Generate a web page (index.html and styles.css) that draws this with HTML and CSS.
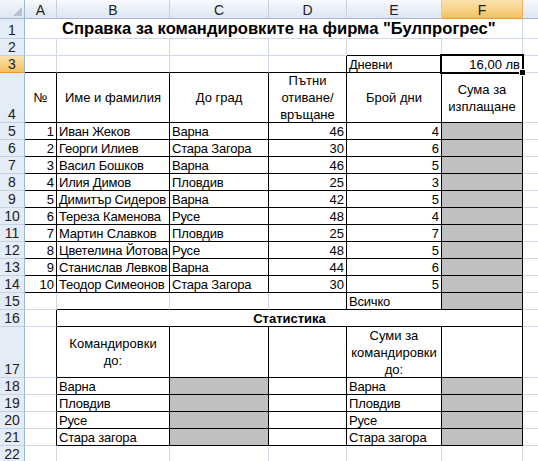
FILE: index.html
```html
<!DOCTYPE html>
<html>
<head>
<meta charset="utf-8">
<link rel="stylesheet" href="styles.css">
</head>
<body>
<div class="sheet">
  <div class="corner"><svg class="tri" width="10" height="10" viewBox="0 0 10 10"><polygon points="10,1 10,10 1,10" fill="#b6c4d6"/></svg></div>
  <div class="ch">A</div><div class="ch">B</div><div class="ch">C</div><div class="ch">D</div><div class="ch">E</div><div class="ch sel">F</div><div class="ch last"></div>

  <div class="rh">1</div><div class="c title">Справка за командировките на фирма "Булпрогрес"</div><div class="c last"></div>

  <div class="rh">2</div><div class="c"></div><div class="c"></div><div class="c"></div><div class="c"></div><div class="c b"></div><div class="c b"></div><div class="c last"></div>

  <div class="rh sel">3</div><div class="c b"></div><div class="c b"></div><div class="c b"></div><div class="c b r"></div><div class="c b r">Дневни</div><div class="c b r tr active">16,00 лв<span class="handle"></span></div><div class="c last"></div>

  <div class="rh">4</div>
  <div class="c b r tc vc"><span>№</span></div>
  <div class="c b r tc vc"><span>Име и фамилия</span></div>
  <div class="c b r tc vc"><span>До град</span></div>
  <div class="c b r tc vc"><span>Пътни<br>отиване/<br>връщане</span></div>
  <div class="c b r tc vc"><span>Брой дни</span></div>
  <div class="c b r tc vc"><span>Сума за<br>изплащане</span></div>
  <div class="c last"></div>

  <div class="rh">5</div><div class="c b r tr">1</div><div class="c b r">Иван Жеков</div><div class="c b r">Варна</div><div class="c b r tr">46</div><div class="c b r tr">4</div><div class="c b r g"></div><div class="c last"></div>
  <div class="rh">6</div><div class="c b r tr">2</div><div class="c b r">Георги Илиев</div><div class="c b r">Стара Загора</div><div class="c b r tr">30</div><div class="c b r tr">6</div><div class="c b r g"></div><div class="c last"></div>
  <div class="rh">7</div><div class="c b r tr">3</div><div class="c b r">Васил Бошков</div><div class="c b r">Варна</div><div class="c b r tr">46</div><div class="c b r tr">5</div><div class="c b r g"></div><div class="c last"></div>
  <div class="rh">8</div><div class="c b r tr">4</div><div class="c b r">Илия Димов</div><div class="c b r">Пловдив</div><div class="c b r tr">25</div><div class="c b r tr">3</div><div class="c b r g"></div><div class="c last"></div>
  <div class="rh">9</div><div class="c b r tr">5</div><div class="c b r">Димитър Сидеров</div><div class="c b r">Варна</div><div class="c b r tr">42</div><div class="c b r tr">5</div><div class="c b r g"></div><div class="c last"></div>
  <div class="rh">10</div><div class="c b r tr">6</div><div class="c b r">Тереза Каменова</div><div class="c b r">Русе</div><div class="c b r tr">48</div><div class="c b r tr">4</div><div class="c b r g"></div><div class="c last"></div>
  <div class="rh">11</div><div class="c b r tr">7</div><div class="c b r">Мартин Славков</div><div class="c b r">Пловдив</div><div class="c b r tr">25</div><div class="c b r tr">7</div><div class="c b r g"></div><div class="c last"></div>
  <div class="rh">12</div><div class="c b r tr">8</div><div class="c b r">Цветелина Йотова</div><div class="c b r">Русе</div><div class="c b r tr">48</div><div class="c b r tr">5</div><div class="c b r g"></div><div class="c last"></div>
  <div class="rh">13</div><div class="c b r tr">9</div><div class="c b r">Станислав Левков</div><div class="c b r">Варна</div><div class="c b r tr">44</div><div class="c b r tr">6</div><div class="c b r g"></div><div class="c last"></div>
  <div class="rh">14</div><div class="c b r tr">10</div><div class="c b r">Теодор Симеонов</div><div class="c b r">Стара Загора</div><div class="c b r tr">30</div><div class="c b r tr">5</div><div class="c b r g"></div><div class="c last"></div>

  <div class="rh">15</div><div class="c"></div><div class="c b"></div><div class="c b"></div><div class="c b r"></div><div class="c b r">Всичко</div><div class="c b r g"></div><div class="c last"></div>

  <div class="rh">16</div><div class="c r"></div><div class="c b r tc bold stat">Статистика</div><div class="c last"></div>

  <div class="rh">17</div><div class="c r"></div>
  <div class="c b r tc vc"><span>Командировки<br>до:</span></div>
  <div class="c b r"></div><div class="c b r"></div>
  <div class="c b r tc vc"><span>Суми за<br>командировки<br>до:</span></div>
  <div class="c b r"></div><div class="c last"></div>

  <div class="rh">18</div><div class="c r"></div><div class="c b r">Варна</div><div class="c b r g"></div><div class="c b r"></div><div class="c b r">Варна</div><div class="c b r g"></div><div class="c last"></div>
  <div class="rh">19</div><div class="c r"></div><div class="c b r">Пловдив</div><div class="c b r g"></div><div class="c b r"></div><div class="c b r">Пловдив</div><div class="c b r g"></div><div class="c last"></div>
  <div class="rh">20</div><div class="c r"></div><div class="c b r">Русе</div><div class="c b r g"></div><div class="c b r"></div><div class="c b r">Русе</div><div class="c b r g"></div><div class="c last"></div>
  <div class="rh">21</div><div class="c r"></div><div class="c b r">Стара загора</div><div class="c b r g"></div><div class="c b r"></div><div class="c b r">Стара загора</div><div class="c b r g"></div><div class="c last"></div>

  <div class="rh">22</div><div class="c"></div><div class="c"></div><div class="c"></div><div class="c"></div><div class="c"></div><div class="c"></div><div class="c last"></div>
</div>
</body>
</html>
```
FILE: styles.css
```css
html, body {
  margin: 0;
  padding: 0;
  background: #fff;
  overflow: hidden;
}
.sheet {
  display: grid;
  grid-template-columns: 25px 32px 113px 99px 78px 95px 81px 1fr;
  grid-template-rows: 19px 20px 17px 17px 50px repeat(10, 17px) 17px 17px 51px repeat(4, 17px) 17px;
  width: 538px;
  height: 461px;
  overflow: hidden;
  font-family: "Liberation Sans", Arial, sans-serif;
  font-size: 13px;
  color: #000;
}
.corner {
  box-sizing: border-box;
  background: linear-gradient(#f3f6fb, #dfe7f2);
  border-right: 1px solid #9eb6ce;
  border-bottom: 1px solid #9eb6ce;
  display: flex;
  align-items: flex-end;
  justify-content: flex-end;
  padding: 0 2px 2px 0;
}
.tri { display: block; }
.ch {
  box-sizing: border-box;
  background: linear-gradient(#f9fbfd 0%, #eaf0f8 45%, #dde6f2 100%);
  border-right: 1px solid #c5d2e2;
  border-bottom: 1px solid #9eb6ce;
  display: flex;
  align-items: center;
  justify-content: center;
  font-size: 14px;
  color: #222;
  padding-top: 1px;
}
.ch.sel {
  background: linear-gradient(#fbe2ad 0%, #f8d48b 50%, #f1c15f 100%);
  border-bottom-color: #f29536;
  border-right-color: #f2b35c;
}
.rh {
  box-sizing: border-box;
  background: #e4ecf7;
  border-right: 1px solid #9eb6ce;
  border-bottom: 1px solid #c5d2e2;
  display: flex;
  align-items: flex-end;
  justify-content: center;
  font-size: 14px;
  line-height: 16px;
  color: #222;
}
.rh.sel {
  background: linear-gradient(#fbe2ad, #f1c15f);
  border-bottom-color: #f29536;
}
.c {
  box-sizing: border-box;
  border-right: 1px solid #d0d7e5;
  border-bottom: 1px solid #d0d7e5;
  display: flex;
  align-items: flex-end;
  padding: 0 0 0 2px;
  line-height: 15px;
  letter-spacing: -0.2px;
  white-space: nowrap;
  overflow: hidden;
  background: #fff;
}
.last { border-right: 0; }
.r { border-right-color: #000; }
.b { border-bottom-color: #000; }
.g { background: #c0c0c0; }
.tr { justify-content: flex-end; padding: 0 2px 0 0; letter-spacing: 0; }
.tc { justify-content: center; text-align: center; padding: 0 2px; letter-spacing: 0; }
.vc { align-items: center; }
.vc span { line-height: 17px; }
.bold { font-weight: bold; }
.title {
  grid-column: 2 / span 6;
  justify-content: flex-start;
  padding-left: 37px;
  font-weight: bold;
  font-size: 16.6px;
  letter-spacing: 0;
  line-height: 19px;
  overflow: visible;
}
.stat { grid-column: 3 / span 5; }
.active {
  position: relative;
  overflow: visible;
}
.active::after {
  content: "";
  position: absolute;
  left: -2px;
  top: -2px;
  right: -2px;
  bottom: -2px;
  border: 2px solid #000;
  pointer-events: none;
}
.handle {
  position: absolute;
  right: -4px;
  bottom: -4px;
  width: 5px;
  height: 5px;
  background: #000;
  border: 1px solid #fff;
  z-index: 2;
}
```
